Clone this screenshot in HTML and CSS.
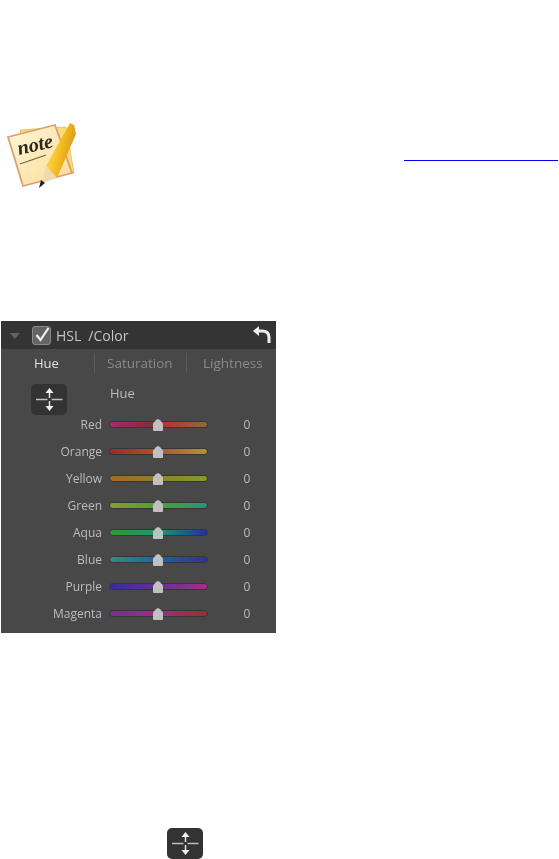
FILE: index.html
```html
<!DOCTYPE html>
<html lang="en">
<head>
<meta charset="utf-8">
<title>HSL / Color</title>
<link rel="stylesheet" href="styles.css">
</head>
<body>
<div class="note">
  <svg class="note-icon" width="78" height="72" viewBox="0 0 78 72">
    <defs>
      <linearGradient id="paper" x1="0" y1="0" x2="1" y2="1">
        <stop offset="0" stop-color="#fff6d8"/>
        <stop offset="1" stop-color="#fbdc96"/>
      </linearGradient>
      <linearGradient id="pencil" x1="0" y1="0" x2="1" y2="0.4">
        <stop offset="0" stop-color="#fdeb7a"/>
        <stop offset="0.5" stop-color="#f7c428"/>
        <stop offset="1" stop-color="#dc9412"/>
      </linearGradient>
    </defs>
    <g transform="translate(0 -122)">
      <polygon points="20,130 66,127 74,173 30,180" fill="#f6dc7c" stroke="#e8c460"/>
      <polygon points="8,137 55,125 72,173 23,186" fill="url(#paper)" stroke="#dba070" stroke-width="1.8"/>
      <text x="19" y="155" class="note-word" textLength="36" lengthAdjust="spacingAndGlyphs" transform="rotate(-13 19 155)">note</text>
      <line x1="20" y1="164" x2="46" y2="155" stroke="#75623a" stroke-width="1.1"/>
      <polygon points="70,123 74,125 76,134 57,178 46,166" fill="url(#pencil)"/>
      <polygon points="46,166 57,178 42,183" fill="#eed9b0"/>
      <polygon points="41,180 45,183 39,188" fill="#222"/>
    </g>
  </svg>
  <span class="link-line"></span>
</div>

<section class="panel">
  <header class="panel-head">
    <span class="caret"></span>
    <span class="check">
      <svg width="18" height="18" viewBox="0 0 18 18"><path d="M3.500 9l4 5 8-12" fill="none" stroke="#f2f2f2" stroke-width="2.200"/></svg>
    </span>
    <span class="head-title">HSL</span>
    <span class="head-sub">/Color</span>
    <svg class="reset" width="20" height="20" viewBox="0 0 20 20"><path d="M6 6h4c4 0 7 2 7 6.500v5.500" fill="none" stroke="#eeeeee" stroke-width="3"/><path d="M1 6l6-5v10z" fill="#eeeeee"/></svg>
  </header>
  <nav class="tabs">
    <span class="tab tab-hue">Hue</span>
    <span class="tab tab-sat">Saturation</span>
    <span class="tab tab-light">Lightness</span>
  </nav>
  <div class="tool-row">
    <span class="adjust">
      <svg width="36" height="31" viewBox="0 0 36 31"><use href="#adj"/></svg>
    </span>
    <span class="tool-label">Hue</span>
  </div>
  <div class="rows">
    <div class="row"><span class="label">Red</span><span class="track t-red"><i class="thumb"></i></span><span class="val">0</span></div>
    <div class="row"><span class="label">Orange</span><span class="track t-orange"><i class="thumb"></i></span><span class="val">0</span></div>
    <div class="row"><span class="label">Yellow</span><span class="track t-yellow"><i class="thumb"></i></span><span class="val">0</span></div>
    <div class="row"><span class="label">Green</span><span class="track t-green"><i class="thumb"></i></span><span class="val">0</span></div>
    <div class="row"><span class="label">Aqua</span><span class="track t-aqua"><i class="thumb"></i></span><span class="val">0</span></div>
    <div class="row"><span class="label">Blue</span><span class="track t-blue"><i class="thumb"></i></span><span class="val">0</span></div>
    <div class="row"><span class="label">Purple</span><span class="track t-purple"><i class="thumb"></i></span><span class="val">0</span></div>
    <div class="row"><span class="label">Magenta</span><span class="track t-magenta"><i class="thumb"></i></span><span class="val">0</span></div>
  </div>
</section>

<div class="bottom">
  <span class="adjust">
    <svg width="36" height="31" viewBox="0 0 36 31">
      <g id="adj">
        <path d="M5 15.500h11.500M20.500 15.500h11" stroke="#c0c0c0" stroke-width="1.500" fill="none"/>
        <path d="M18.500 8v6M18.500 17v6" stroke="#e0e0e0" stroke-width="1.500" fill="none"/>
        <path d="M18.500 4l4 5h-8zM18.500 27l4-5h-8z" fill="#f0f0f0"/>
      </g>
    </svg>
  </span>
</div>
</body>
</html>
```
FILE: styles.css
```css
html, body { margin: 0; padding: 0; background: #fff; }
body { width: 559px; height: 859px; overflow: hidden; font-family: "Open Sans", "Liberation Sans", sans-serif; }

.note { display: flex; padding-top: 122px; height: 72px; }
.note-icon { flex: none; display: block; filter: blur(0.5px); }
.note-word { font-family: "Liberation Serif", serif; font-style: italic; font-weight: 700; font-size: 20px; fill: #2a2a22; }
.link-line { flex: none; width: 154px; height: 1px; margin: 38px 0 0 326px; background: #0000ff; }

.panel { margin: 127px 0 0 1px; width: 275px; height: 312px; background: #484848; color: #bcbcbc; font-size: 13px; }
.panel-head { position: relative; display: flex; align-items: center; height: 28px; background: #343434; filter: blur(0.35px); }
.caret { width: 0; height: 0; margin: 2px 0 0 9px; border-left: 5px solid transparent; border-right: 5px solid transparent; border-top: 6px solid #626262; }
.check { width: 17px; height: 17px; margin-left: 12px; border: 1px solid #8a8a8a; border-radius: 3px; background: #646464; }
.check svg { display: block; margin: -1px 0 0 0; }
.head-title { margin-left: 5px; font-size: 14px; color: #c4c4c4; }
.head-sub { margin-left: 7px; font-size: 14px; color: #c4c4c4; }
.reset { position: absolute; left: 251px; top: 4px; }

.tabs { display: flex; align-items: center; height: 28px; margin-top: 0; font-size: 13.500px; color: #8a8a8a; filter: blur(0.35px); }
.tab { display: block; }
.tab-hue { width: 60px; padding-left: 33px; color: #e0e0e0; font-size: 13px; border-right: 1px solid #5c5c5c; line-height: 20px; }
.tab-sat { width: 79px; padding-left: 12px; margin-right: 1px; border-right: 1px solid #5c5c5c; line-height: 20px; }
.tab-light { padding-left: 15px; white-space: nowrap; line-height: 20px; }

.tool-row { display: flex; height: 31px; margin-top: 7px; filter: blur(0.3px); }
.adjust { display: block; flex: none; width: 36px; height: 31px; margin-left: 30px; background: #333; border-radius: 5px; }
.adjust svg { display: block; }
.tool-label { margin: 0 0 0 43px; line-height: 18px; font-size: 13px; }

.rows { margin-top: -4px; filter: blur(0.35px); }
.row { display: flex; align-items: center; height: 27px; }
.label { width: 101px; text-align: right; font-size: 12px; line-height: 16px; }
.track { position: relative; display: block; width: 97px; height: 5px; margin-left: 7px; margin-right: 1px; border: 1px solid #363636; border-radius: 4px; }
.val { width: 22px; margin-left: 27px; text-align: center; font-size: 12px; }
.thumb { position: absolute; left: 43px; top: -3px; width: 10px; height: 12px; background: #c0c0c0; border-radius: 1px; clip-path: polygon(50% 0, 70% 8%, 100% 38%, 100% 100%, 0 100%, 0 38%, 30% 8%); }

.t-red { background: linear-gradient(90deg, #9a2f74, #8c2a38 40%, #b03a30 58%, #96682e); }
.t-orange { background: linear-gradient(90deg, #a02830, #a8582c 50%, #aa982a); }
.t-yellow { background: linear-gradient(90deg, #a8652c, #90802c 50%, #7e9c30); }
.t-green { background: linear-gradient(90deg, #8c9c2c, #50a032 50%, #24967c); }
.t-aqua { background: linear-gradient(90deg, #369432, #229470 50%, #22309a); }
.t-blue { background: linear-gradient(90deg, #24967c, #24609e 50%, #3a2c98); }
.t-purple { background: linear-gradient(90deg, #3a2c98, #682e98 50%, #a0308a); }
.t-magenta { background: linear-gradient(90deg, #722e96, #a02e80 50%, #9c2c30); }

.bottom { margin: 195px 0 0 137px; }
```
